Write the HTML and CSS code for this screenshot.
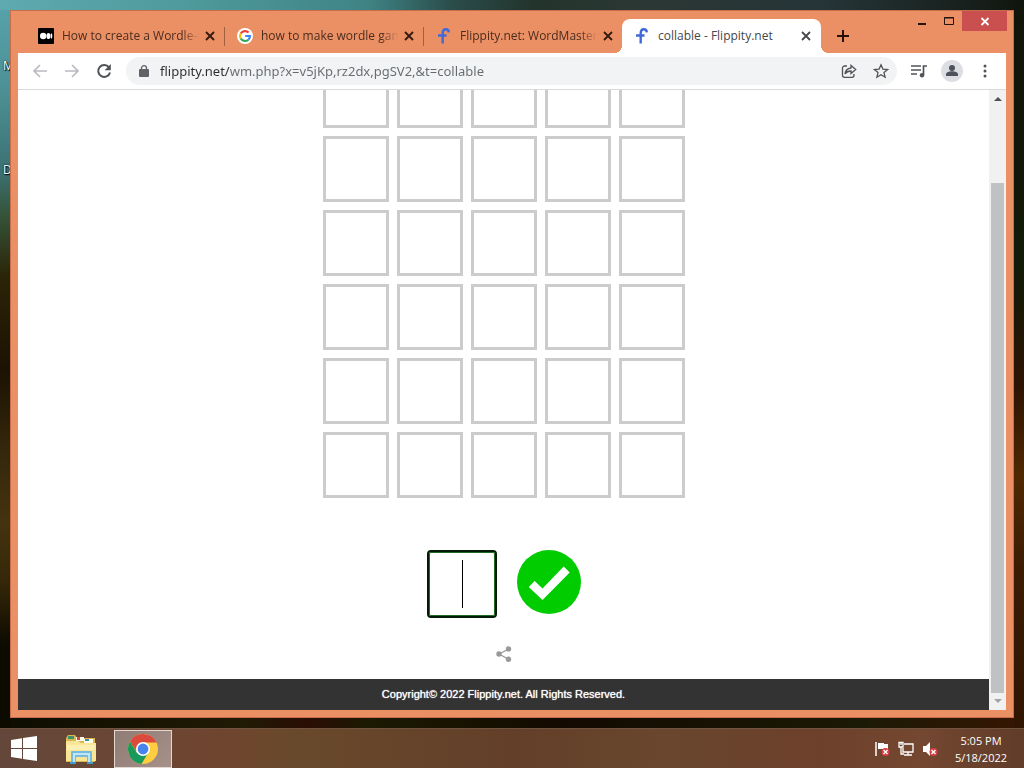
FILE: index.html
```html
<!DOCTYPE html>
<html lang="en">
<head>
<meta charset="utf-8">
<meta name="viewport" content="width=device-width, initial-scale=1">
<title>collable - Flippity.net</title>
<link rel="stylesheet" href="styles.css">
</head>
<body>
<div class="desktop">
  <span class="shortcut shortcut-first">M</span>
  <span class="shortcut shortcut-second">D</span>

  <main class="workspace">
    <section class="window">
      <header class="tabstrip">
        <div class="tab">
          <svg class="favicon" viewBox="0 0 16 16" aria-hidden="true"><rect width="16" height="16" rx="1"/><circle cx="5.2" cy="8" r="3.2" fill="#fff"/><ellipse cx="10.4" cy="8" rx="1.9" ry="3.1" fill="#fff"/><ellipse cx="13.4" cy="8" rx=".9" ry="2.7" fill="#fff"/></svg>
          <span class="tab-title">How to create a Wordle-l</span>
          <button class="tab-close" aria-label="Close tab"><svg viewBox="0 0 16 16"><path d="M4 4l8 8M12 4l-8 8"/></svg></button>
        </div>
        <div class="tab">
          <svg class="favicon" viewBox="0 0 16 16" aria-hidden="true"><circle cx="8" cy="8" r="8" fill="#fff"/><g fill="none" stroke-width="2.2"><path d="M11.6 4.6A5 5 0 0 0 3.7 5.5" stroke="#ea4335"/><path d="M3.7 5.5a5 5 0 0 0 0 5" stroke="#fbbc05"/><path d="M3.7 10.5a5 5 0 0 0 7.7 1.2" stroke="#34a853"/><path d="M11.4 11.7A5 5 0 0 0 13 8H8.2" stroke="#4285f4"/></g></svg>
          <span class="tab-title">how to make wordle gam</span>
          <button class="tab-close" aria-label="Close tab"><svg viewBox="0 0 16 16"><path d="M4 4l8 8M12 4l-8 8"/></svg></button>
        </div>
        <div class="tab tab-before-active">
          <svg class="favicon flippity" viewBox="0 0 16 16" aria-hidden="true"><path d="M12.800 4.400C12.600.5 6.900-.2 6.700 5v10.500M2 7.500h8.500"/></svg>
          <span class="tab-title">Flippity.net: WordMaster</span>
          <button class="tab-close" aria-label="Close tab"><svg viewBox="0 0 16 16"><path d="M4 4l8 8M12 4l-8 8"/></svg></button>
        </div>
        <div class="tab tab-active">
          <svg class="favicon flippity" viewBox="0 0 16 16" aria-hidden="true"><path d="M12.800 4.400C12.600.5 6.900-.2 6.700 5v10.500M2 7.500h8.500"/></svg>
          <span class="tab-title">collable - Flippity.net</span>
          <button class="tab-close" aria-label="Close tab"><svg viewBox="0 0 16 16"><path d="M4 4l8 8M12 4l-8 8"/></svg></button>
        </div>
        <button class="new-tab" aria-label="New tab"><svg viewBox="0 0 16 16"><path d="M8 2v12M2 8h12"/></svg></button>
        <div class="window-buttons">
          <button class="window-button" aria-label="Minimize"><svg viewBox="0 0 14 14"><path d="M3 10h8" stroke-width="2"/></svg></button>
          <button class="window-button" aria-label="Maximize"><svg viewBox="0 0 14 14"><path d="M2.500 3.500h9v7h-9zM2 4h10"/></svg></button>
          <button class="window-button window-close" aria-label="Close"><svg viewBox="0 0 14 14"><path d="M3.500 4l7 7M10.500 4l-7 7" stroke-width="1.800"/></svg></button>
        </div>
      </header>

      <nav class="toolbar">
        <button class="tool dim" aria-label="Back"><svg viewBox="0 0 16 16"><path d="M15 8H2M8 2L2 8l6 6"/></svg></button>
        <button class="tool dim" aria-label="Forward"><svg viewBox="0 0 16 16"><path d="M1 8h13M8 2l6 6-6 6"/></svg></button>
        <button class="tool" aria-label="Reload"><svg viewBox="0 0 16 16"><path d="M13 4.300A6 6 0 1 0 14 9.500"/><path class="solid" d="M14.800 1v6.200H8.600z"/></svg></button>
        <div class="omnibox">
          <svg class="lock" viewBox="0 0 10 12" aria-hidden="true"><rect y="4" width="10" height="8" rx="1"/><path d="M2.500 4.500V3a2.500 2.300 0 0 1 5 0v1.500" fill="none" stroke="#5f6368" stroke-width="1.300"/></svg>
          <input class="address" type="text" aria-label="Address" value="flippity.net/wm.php?x=v5jKp,rz2dx,pgSV2,&amp;t=collable">
          <div class="page-actions">
            <button class="tool thin" aria-label="Share this page"><svg viewBox="0 0 16 16"><path d="M6 3H3.500a2 2 0 0 0-2 2v7.300a2 2 0 0 0 2 2H11a2 2 0 0 0 2-2V11"/><path d="M10 5V2.500l4.700 4-4.700 4V8C7.500 8 5.300 9 4 11 4.300 8 6.500 5.500 10 5z"/></svg></button>
            <button class="tool thin" aria-label="Bookmark"><svg viewBox="0 0 16 16"><path d="M8 1.800l1.900 4.300 4.700.4-3.600 3.100 1.100 4.600L8 11.800l-4.100 2.400L5 9.600 1.400 6.500l4.700-.4z"/></svg></button>
          </div>
        </div>
        <button class="tool media" aria-label="Media controls"><svg viewBox="0 0 16 16"><path d="M0 3h10M0 7h10M0 11h6M12.500 12V3H16"/><circle class="solid" cx="11" cy="12.200" r="2.200"/></svg></button>
        <button class="profile" aria-label="Profile"><svg viewBox="0 0 22 22"><circle cx="11" cy="8" r="3"/><path d="M5 16v-1.500c0-2 3-3.200 6-3.200s6 1.200 6 3.200V16z"/></svg></button>
        <button class="tool" aria-label="Menu"><svg viewBox="0 0 16 16"><g class="solid"><circle cx="8" cy="3" r="1.500"/><circle cx="8" cy="8" r="1.500"/><circle cx="8" cy="13" r="1.500"/></g></svg></button>
      </nav>

      <div class="viewport">
        <div class="page">
          <div class="board">
            <i></i><i></i><i></i><i></i><i></i>
            <i></i><i></i><i></i><i></i><i></i>
            <i></i><i></i><i></i><i></i><i></i>
            <i></i><i></i><i></i><i></i><i></i>
            <i></i><i></i><i></i><i></i><i></i>
            <i></i><i></i><i></i><i></i><i></i>
          </div>
          <form class="guess">
            <div class="guess-field">
              <input class="guess-input" type="text" aria-label="Your guess">
              <span class="caret"></span>
            </div>
            <button class="submit" type="button" aria-label="Submit guess"><svg viewBox="0 0 64 64"><path d="M11.700 37l6-6 7.800 7.500L46.700 16.500l6 6L25.500 50z"/></svg></button>
          </form>
          <button class="share" aria-label="Share"><svg viewBox="0 0 16 16"><path d="M13 3L3 8l10 5.500" fill="none" stroke="#999" stroke-width="1.300"/><circle cx="3" cy="8" r="2.700"/><circle cx="12.500" cy="2.900" r="2.700"/><circle cx="12.500" cy="13.200" r="2.700"/></svg></button>
          <footer class="copyright">Copyright© 2022 Flippity.net. All Rights Reserved.</footer>
        </div>
        <div class="scrollbar">
          <svg class="arrow" viewBox="0 0 17 17"><path d="M5 11h8L9 7z" fill="#505050"/></svg>
          <div class="track"><div class="thumb"></div></div>
          <svg class="arrow" viewBox="0 0 17 17"><path d="M5 6h8l-4 4z" fill="#a0a3a3"/></svg>
        </div>
      </div>
    </section>
  </main>

  <footer class="taskbar">
    <button class="task" aria-label="Start"><svg class="start-icon" viewBox="0 0 26 26"><path fill="#fff" d="M0 4l11-1.700V12H0zM12 2.100L26 0v12H12zM0 13h11v9.700L0 21zM12 13h14v12l-14-2.100z"/></svg></button>
    <button class="task" aria-label="File Explorer"><svg class="app-icon" viewBox="0 0 32 32"><path d="M1 5l2-3h7l2 3h18v24H1z" fill="#d9b64e"/><path d="M3 3h6v3H3z" fill="#40916d"/><path d="M11 4h8v4h-8z" fill="#fbfbef"/><path d="M12 4h3v3h-3z" fill="#d84a2c"/><path d="M19 6h9v4h-9z" fill="#fffdf2"/><path d="M20 6h4v2h-4z" fill="#3f8e9c"/><path d="M1 8h12l3 2h15v18H1z" fill="#f8e596"/><path d="M2 12h28v5H2z" fill="#fcefb2"/><path d="M6 30V19q0-1 1-1h19q1 0 1 1v11h-5v-6H11v6z" fill="#74bbdf"/><path d="M8 29v-9h17v9h-2v-7H10v7z" fill="#c0e5f7"/><path d="M5 29h6v2H5zM22 29h6v2h-6z" fill="#439bc9"/></svg></button>
    <button class="task task-open" aria-label="Google Chrome"><svg class="app-icon" viewBox="0 0 32 32"><circle cx="16" cy="16" r="15" fill="#ffcd40"/><path d="M3 8.500A15 15 0 0 1 29.500 9.500H16a7 7 0 0 0-6.500 9z" fill="#dc4a3d"/><path d="M3 8.500A15 15 0 0 0 14.500 31L21 20H10z" fill="#179a5b"/><circle cx="16" cy="16" r="7" fill="#fff"/><circle cx="16" cy="16" r="5.400" fill="#4784ee"/></svg></button>
    <div class="tray">
      <svg class="tray-icon" viewBox="0 0 16 16"><path d="M2 1v14" stroke="#fff" stroke-width="1.500"/><path d="M4 2h6v1h4v6H9V8H4z" fill="#fff"/><circle cx="11.500" cy="11" r="4" fill="#d73c42"/><path d="M9.500 9l4 4M13.500 9l-4 4" stroke="#fff" stroke-width="1.400"/></svg>
      <svg class="tray-icon" viewBox="0 0 16 16" fill="none" stroke="#fff" stroke-width="1.300"><path d="M6 3h9v8H5V7M10 11v3M6 14h8M3 6v7h3"/><path d="M1 1.500h4V6H1zM3 1v3"/></svg>
      <svg class="tray-icon" viewBox="0 0 16 16"><path d="M1 5h3l4-4v14l-4-4H1z" fill="#fff"/><circle cx="11.500" cy="11" r="4" fill="#d73c42"/><path d="M9.500 9l4 4M13.500 9l-4 4" stroke="#fff" stroke-width="1.400"/></svg>
    </div>
    <div class="clock"><time>5:05 PM</time><time>5/18/2022</time></div>
  </footer>
</div>
</body>
</html>
```
FILE: styles.css
```css
* { box-sizing: border-box; }

body {
  margin: 0;
  font-family: "Open Sans", "Noto Sans", sans-serif;
  font-size: 12px;
}

button {
  border: 0;
  padding: 0;
  background: none;
  display: grid;
  place-items: center;
  flex: none;
}

svg { display: block; flex: none; }

.desktop {
  position: relative;
  height: 100vh;
  display: flex;
  flex-direction: column;
  background:
    linear-gradient(90deg, #5fa9b0 0%, #4f9a9c 18%, #3f8385 36%, #2b4d4b 44%, #23342c 52%, #2b3733 62%, #263538 80%, #161e1a 96%, #10140a 100%) top / 100% 10px no-repeat,
    linear-gradient(#57a3ac 0, #4c9094 12%, #3c7274 22%, #35543a 28%, #2b2407 36%, #1c1202 48%, #33260b 58%, #44330f 68%, #342708 76%, #0d0a00 84%, #0d0a00 100%) left / 10px 100% no-repeat,
    linear-gradient(#10140a 0, #121a08 35%, #2c1302 50%, #4f2803 62%, #3b1c03 74%, #2c1301 100%) right / 10px 100% no-repeat,
    linear-gradient(90deg, #0d0d02 0%, #211a04 24%, #2a0d04 30%, #1b1a02 36%, #130a01 55%, #1b1a05 84%, #361602 100%);
}

.shortcut {
  position: absolute;
  left: 3px;
  color: #fff;
  line-height: 16px;
  text-shadow: 1px 1px 1px #000, 0 0 2px #000;
}
.shortcut-first { top: 58px; }
.shortcut-second { top: 162px; }

.workspace {
  position: relative;
  flex: 1;
  min-height: 0;
  padding: 10px;
  display: flex;
}

.window {
  flex: 1;
  min-width: 0;
  display: flex;
  flex-direction: column;
  padding: 0 7px 7px;
  border: 1px solid #c86d49;
  background: #eb9064;
}

.tabstrip {
  height: 42px;
  display: flex;
  align-items: flex-end;
  padding-left: 8px;
}

.tab {
  position: relative;
  width: 199px;
  height: 34px;
  padding: 0 7px 0 12px;
  display: flex;
  align-items: center;
  color: #4b2c1e;
}
.tab:not(.tab-active):not(.tab-before-active)::after {
  content: "";
  position: absolute;
  right: 0;
  top: 8px;
  width: 1px;
  height: 19px;
  background: #a3603f;
}
.tab-title {
  flex: 1;
  min-width: 0;
  margin-left: 8px;
  overflow: hidden;
  white-space: nowrap;
  line-height: 18px;
  -webkit-mask-image: linear-gradient(90deg, #000 86%, transparent 98%);
  mask-image: linear-gradient(90deg, #000 86%, transparent 98%);
}
.favicon { width: 16px; height: 16px; }
.flippity { fill: none; stroke: #4169d8; stroke-width: 2.4; }
.tab-close svg { width: 16px; height: 16px; fill: none; stroke: #33190e; stroke-width: 1.8; }

.tab-active {
  margin-left: -1px;
  background: #fff;
  color: #45474a;
  border-radius: 8px 8px 0 0;
}
.tab-active .tab-title { -webkit-mask-image: none; mask-image: none; }
.tab-active .tab-close svg { stroke: #45474a; }
.tab-active::before,
.tab-active::after {
  content: "";
  position: absolute;
  bottom: 0;
  width: 8px;
  height: 8px;
}
.tab-active::before { right: 100%; background: radial-gradient(circle at 0 0, transparent 8px, #fff 8px); }
.tab-active::after { left: 100%; background: radial-gradient(circle at 100% 0, transparent 8px, #fff 8px); }

.new-tab { width: 44px; height: 34px; }
.new-tab svg { width: 16px; height: 16px; fill: none; stroke: #24130b; stroke-width: 2; }

.window-buttons {
  margin-left: auto;
  margin-right: -1px;
  align-self: flex-start;
  display: flex;
}
.window-button { width: 27px; height: 20px; }
.window-button svg { width: 14px; height: 14px; fill: none; stroke: #24130b; stroke-width: 1; }
.window-close { width: 45px; background: #c9504f; }
.window-close svg { stroke: #fff; }

.toolbar {
  height: 37px;
  display: flex;
  align-items: center;
  padding: 0 5px 0 6px;
  background: #fff;
  border-bottom: 1px solid #d9dadc;
}
.tool { width: 32px; height: 28px; }
.tool svg { width: 16px; height: 16px; fill: none; stroke: #505357; stroke-width: 2; }
.tool .solid { fill: #505357; stroke: none; }
.dim svg { stroke: #b9bbbe; stroke-width: 1.7; }
.thin svg { stroke-width: 1.3; }
.media svg { stroke-width: 1.7; }
.omnibox {
  flex: 1;
  min-width: 0;
  height: 28px;
  margin: 0 6px;
  padding-left: 13px;
  display: flex;
  align-items: center;
  gap: 11px;
  border-radius: 14px;
  background: #f1f3f4;
}
.page-actions { display: flex; }
.lock { width: 10px; height: 12px; fill: #5f6368; }
.address {
  flex: 1;
  min-width: 0;
  border: 0;
  padding: 0;
  outline: 0;
  font: 13px/20px "Noto Sans", "Open Sans", sans-serif;
  color: transparent;
  background: linear-gradient(90deg, #2b2d30 70px, #666a6f 70px);
  -webkit-background-clip: text;
  background-clip: text;
}
.profile {
  width: 22px;
  height: 22px;
  margin: 0 6px;
  border-radius: 50%;
  background: #dcdee3;
}
.profile svg { width: 22px; height: 22px; fill: #4e525c; }

.viewport {
  flex: 1;
  min-height: 0;
  display: flex;
  background: #fff;
}
.page {
  flex: 1;
  min-width: 0;
  overflow: hidden;
  display: flex;
  flex-direction: column;
  justify-content: flex-end;
  align-items: center;
}
.board {
  flex: none;
  display: grid;
  grid-template-columns: repeat(5, 66px);
  grid-auto-rows: 66px;
  gap: 8px;
}
.board i { border: 3px solid #ccc; }

.guess {
  flex: none;
  margin-top: 52px;
  display: flex;
  gap: 20px;
}
.guess-field { position: relative; width: 70px; height: 68px; }
.guess-input {
  width: 100%;
  height: 100%;
  border: 2px solid #031a04;
  border-radius: 4px;
  outline: 0;
  background: #fff;
  box-shadow: inset 0 0 0 1px #1f6a22;
  font: 40px/48px "Liberation Sans", sans-serif;
  text-align: center;
}
.caret {
  position: absolute;
  left: 50%;
  top: 10px;
  width: 1px;
  height: 48px;
  background: #000;
}
.submit {
  width: 64px;
  height: 64px;
  border-radius: 50%;
  background: #0c0;
}
.submit svg { width: 64px; height: 64px; fill: #fff; }

.share { margin: 28px 0 17px; }
.share svg { width: 16px; height: 16px; fill: #999; }

.copyright {
  flex: none;
  align-self: stretch;
  background: #333;
  color: #fff;
  font: 11px/31px "Liberation Sans", Arial, sans-serif;
  text-shadow: 0 0 1px #fff;
  text-align: center;
}

.scrollbar {
  width: 17px;
  display: flex;
  flex-direction: column;
  background: #f1f1f2;
}
.arrow { width: 17px; height: 17px; }
.track {
  flex: 1;
  display: flex;
  flex-direction: column;
  justify-content: flex-end;
  padding: 0 2px;
}
.thumb { height: 87%; background: #c0c1c2; }

.taskbar {
  height: 40px;
  display: flex;
  align-items: center;
  padding-right: 7px;
  background: linear-gradient(90deg, #63473a 0%, #70452f 22%, #69492b 28%, #633f29 50%, #69462d 65%, #6d402b 80%, #744731 90%, #603c29 100%);
  border-top: 1px solid #715342;
}
.task { width: 57px; height: 38px; }
.task:first-child { width: 48px; }
.task-open {
  width: 58px;
  margin-left: 9px;
  background: linear-gradient(135deg, #8f7c75, #a79189);
  border: 1px solid #e2d8d3;
}
.task:nth-child(2) { margin-left: 4px; margin-right: -4px; }
.start-icon { width: 26px; height: 26px; }
.app-icon { width: 32px; height: 32px; }
.tray {
  margin-left: auto;
  display: flex;
  gap: 8px;
}
.tray-icon { width: 16px; height: 16px; }
.clock {
  width: 72px;
  margin-left: 7px;
  display: flex;
  flex-direction: column;
  align-items: center;
  color: #fff;
  font-size: 11px;
  line-height: 17px;
}
```
